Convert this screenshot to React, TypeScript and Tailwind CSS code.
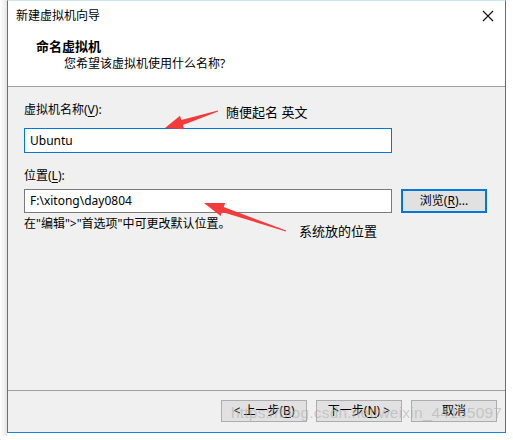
import React from "react";

const F = { fontFamily: '"Noto Sans", "Noto Sans CJK SC", sans-serif' };

function U({ c }: { c: string }) {
  return <span className="underline underline-offset-2">{c}</span>;
}

export default function App() {
  return (
    <div className="relative w-[513px] h-[440px] bg-white overflow-hidden" style={F}>
      <div className="flex h-full">
        <div className="w-[7px] h-[436px] bg-gradient-to-r from-white to-[#e6e6e6]" />
        <div className="w-[499px] h-[433px] border-x border-b border-[#1883d7] border-t border-t-[#cfe3f5] flex flex-col bg-[#f0f0f0]">
          {/* title bar */}
          <div className="h-[29px] bg-white flex items-center justify-between pl-[8px] pr-[8px]">
            <span className="text-[12px] text-black">新建虚拟机向导</span>
            <svg width="12" height="12" viewBox="0 0 12 12" className="mr-[3px]">
              <path d="M1 1 L11 11 M11 1 L1 11" stroke="#111" strokeWidth="1.1" />
            </svg>
          </div>
          {/* header */}
          <div className="h-[57px] bg-white border-b border-[#a0a0a0] flex flex-col pt-[8px]">
            <div className="pl-[28px] text-[13px] font-bold text-black leading-[17px]">命名虚拟机</div>
            <div className="pl-[56px] text-[12px] text-black leading-[17px]">您希望该虚拟机使用什么名称?</div>
          </div>
          {/* body */}
          <div className="h-[304px] border-b border-[#a0a0a0] pl-[16px] pt-[15px] flex flex-col">
            <div className="text-[12px] leading-[16px] text-black">
              虚拟机名称(<U c="V" />):
            </div>
            <div className="mt-[10px] w-[368px] h-[25px] bg-white border border-[#0078d7] flex items-center pl-[5px] text-[12px] text-black">
              Ubuntu
            </div>
            <div className="mt-[15px] text-[12px] leading-[16px] text-black">
              位置(<U c="L" />):
            </div>
            <div className="mt-[5px] flex gap-[9px]">
              <div className="w-[368px] h-[24px] bg-white border border-[#7a7a7a] flex items-center pl-[5px] text-[12px] text-black">
                F:\xitong\day0804
              </div>
              <div className="w-[86px] h-[24px] shrink-0 flex items-center justify-center bg-[#e1e1e1] border-2 border-[#0078d7] text-[12px] text-black">
                <span>
                  浏览(<U c="R" />)...
                </span>
              </div>
            </div>
            <div className="mt-[3px] text-[12px] leading-[16px] text-black">
              在"编辑"&gt;"首选项"中可更改默认位置。
            </div>
          </div>
          {/* footer */}
          <div className="flex-1 flex justify-end items-start pt-[9px] pr-[8px] gap-[9px]">
            <div className="w-[86px] h-[22px] shrink-0 flex items-center justify-center bg-[#e1e1e1] border border-[#adadad] text-[12px] text-black">
              <span>&lt; 上一步(<U c="B" />)</span>
            </div>
            <div className="w-[86px] h-[22px] shrink-0 flex items-center justify-center bg-[#e1e1e1] border border-[#adadad] text-[12px] text-black">
              <span>下一步(<U c="N" />) &gt;</span>
            </div>
            <div className="w-[86px] h-[22px] shrink-0 flex items-center justify-center bg-[#e1e1e1] border border-[#adadad] text-[12px] text-black">
              <span>取消</span>
            </div>
          </div>
        </div>
      </div>

      {/* annotations */}
      <div className="absolute left-[226px] top-[104px] text-[13px] text-black leading-[16px]">随便起名 英文</div>
      <div className="absolute left-[299px] top-[223px] text-[13px] text-black leading-[16px]">系统放的位置</div>
      <svg className="absolute left-0 top-0" width="513" height="440" viewBox="0 0 513 440">
        <polygon
          fill="#f43b3b"
          points="165,128 184.2,129.2 182.9,124.9 218.15,111.5 217.85,110.5 181.3,120.1 180,115.8"
        />
        <polygon
          fill="#f43b3b"
          points="204,203 220.6,216.1 222.1,211.9 285.8,231.5 286.2,230.5 223.7,207.1 225.2,202.9"
        />
      </svg>
      <div
        className="absolute left-[231px] top-[403px] text-[15.5px] text-[#b0b0b0]/60 leading-[20px] tracking-[0.2px]"
        style={{ fontFamily: '"Liberation Sans", sans-serif' }}
      >
        https://blog.csdn.net/weixin_44155097
      </div>
    </div>
  );
}
